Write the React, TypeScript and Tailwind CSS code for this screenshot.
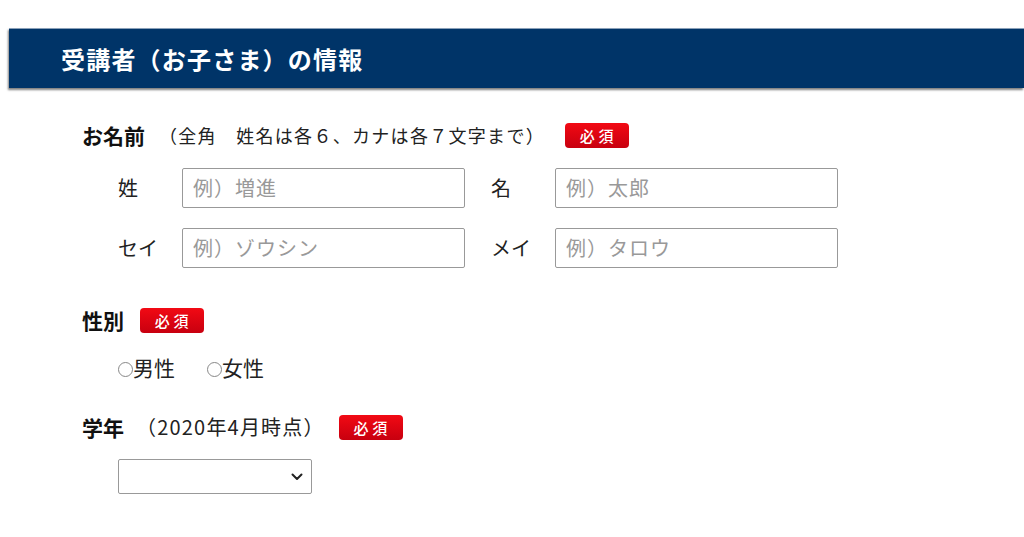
const FONT = "font-['Noto_Sans_CJK_JP','Noto_Sans',sans-serif]"

function Required() {
  return (
    <span className="inline-flex h-[25px] w-[64px] items-center justify-center rounded-[4px] bg-gradient-to-b from-[#f20a14] to-[#c8000f] pl-[3px] text-[15px] font-medium leading-none tracking-[0.25em] text-white">
      必須
    </span>
  )
}

function Field({ label, placeholder }: { label: string; placeholder: string }) {
  return (
    <div className="flex items-center">
      <span className="w-[64px] text-[20px] text-[#222]">{label}</span>
      <input
        className="h-[40px] w-[283px] rounded-[2px] border border-[#999] px-[10px] text-[20px] tracking-[1px] text-[#333] placeholder:text-[#999] outline-none"
        placeholder={placeholder}
      />
    </div>
  )
}

function Radio({ label }: { label: string }) {
  return (
    <label className="flex items-center text-[21px] text-[#222]">
      <span className="mt-[3px] h-[15px] w-[15px] rounded-full border border-[#888]" />
      {label}
    </label>
  )
}

export default function App() {
  return (
    <div className={`${FONT} min-h-[537px] w-[1024px] bg-white pt-[28px]`}>
      {/* header bar */}
      <div className="ml-[9px] flex h-[60px] items-center border-t border-[#8aa0b8] bg-[#003468] pl-[52px] shadow-[-1px_2px_2px_rgba(0,0,0,0.5)]">
        <h1 className="text-[24px] font-bold tracking-[0.05em] text-white">受講者（お子さま）の情報</h1>
      </div>

      <div className="pl-[82px]">
        {/* name */}
        <div className="mt-[32px] flex items-center">
          <span className="text-[21px] font-bold text-[#111]">お名前</span>
          <span className="ml-[14px] text-[18px] tracking-[1.3px] text-[#222]">（全角　姓名は各６、カナは各７文字まで）</span>
          <span className="ml-[20px]"><Required /></span>
        </div>
        <div className="ml-[36px] mt-[16px] grid w-[720px] grid-cols-[373px_auto] gap-y-[20px]">
          <Field label="姓" placeholder="例）増進" />
          <Field label="名" placeholder="例）太郎" />
          <Field label="セイ" placeholder="例）ゾウシン" />
          <Field label="メイ" placeholder="例）タロウ" />
        </div>

        {/* gender */}
        <div className="mt-[37px] flex items-center">
          <span className="text-[21px] font-bold text-[#111]">性別</span>
          <span className="ml-[16px]"><Required /></span>
        </div>
        <div className="ml-[36px] mt-[16px] flex gap-[32px]">
          <Radio label="男性" />
          <Radio label="女性" />
        </div>

        {/* grade */}
        <div className="mt-[28px] flex items-center">
          <span className="text-[21px] font-bold text-[#111]">学年</span>
          <span className="ml-[12px] text-[20px] tracking-[1.2px] text-[#222]">（2020年4月時点）</span>
          <span className="ml-[14px]"><Required /></span>
        </div>
        <div className="ml-[36px] mt-[16px] flex h-[35px] w-[194px] items-center justify-end rounded-[2px] border border-[#999] pr-[8px]">
          <svg width="12" height="8" viewBox="0 0 12 8" fill="none">
            <path d="M1.5 1.5l4.5 4.5 4.5-4.5" stroke="#222" strokeWidth="2" strokeLinecap="round" strokeLinejoin="round" />
          </svg>
        </div>
      </div>
    </div>
  )
}
